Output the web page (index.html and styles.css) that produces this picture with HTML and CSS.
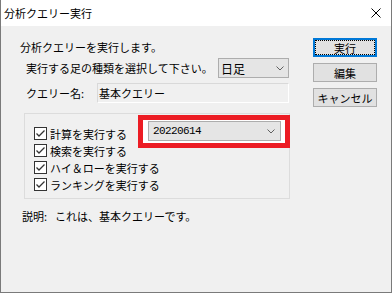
FILE: index.html
```html
<!DOCTYPE html>
<html lang="ja">
<head>
  <meta charset="UTF-8" />
  <title>分析クエリー実行</title>
  <link rel="stylesheet" href="styles.css">
</head>
<body>
  <div class="window">
    <div class="titlebar">
      <span class="title">分析クエリー実行</span>
      <svg class="close" width="10" height="10" viewBox="0 0 10 10">
        <path d="M0.5 0.5 L9.5 9.5 M9.5 0.5 L0.5 9.5" stroke="#000" stroke-width="1" fill="none" />
      </svg>
    </div>

    <div class="client">
      <div class="main">
        <p class="intro">分析クエリーを実行します。</p>

        <div class="field-row">
          <span class="label-long">実行する足の種類を選択して下さい。</span>
          <div class="combo combo-small">
            <span>日足</span>
            <svg class="chevron" width="8" height="5" viewBox="0 0 8 5"><polyline points="0.5,0.5 4,4 7.5,0.5" /></svg>
          </div>
        </div>

        <div class="field-row name-row">
          <span class="label-name">クエリー名:</span>
          <div class="edit">基本クエリー</div>
        </div>

        <div class="group">
          <ul class="checks">
            <li><svg class="checkbox" width="13" height="13" viewBox="0 0 13 13"><rect x="0.5" y="0.5" width="12" height="12" /><polyline points="2.5,6.5 5,9 10.5,3.5" /></svg>計算を実行する</li>
            <li><svg class="checkbox" width="13" height="13" viewBox="0 0 13 13"><rect x="0.5" y="0.5" width="12" height="12" /><polyline points="2.5,6.5 5,9 10.5,3.5" /></svg>検索を実行する</li>
            <li><svg class="checkbox" width="13" height="13" viewBox="0 0 13 13"><rect x="0.5" y="0.5" width="12" height="12" /><polyline points="2.5,6.5 5,9 10.5,3.5" /></svg>ハイ＆ローを実行する</li>
            <li><svg class="checkbox" width="13" height="13" viewBox="0 0 13 13"><rect x="0.5" y="0.5" width="12" height="12" /><polyline points="2.5,6.5 5,9 10.5,3.5" /></svg>ランキングを実行する</li>
          </ul>
          <div class="highlight">
            <div class="combo combo-date">
              <span class="date">20220614</span>
              <svg class="chevron" width="8" height="5" viewBox="0 0 8 5"><polyline points="0.5,0.5 4,4 7.5,0.5" /></svg>
            </div>
          </div>
        </div>

        <p class="note"><span class="note-label">説明:</span>これは、基本クエリーです。</p>
      </div>

      <div class="buttons">
        <div class="btn btn-default">実行</div>
        <div class="btn">編集</div>
        <div class="btn">キャンセル</div>
      </div>
    </div>
  </div>
</body>
</html>
```

FILE: styles.css
```css
* {
  box-sizing: border-box;
  margin: 0;
  padding: 0;
}

html, body {
  width: 100%;
  height: 100%;
  background: #f0f0f0;
  overflow: hidden;
}

body {
  font-family: "Noto Sans CJK JP", "Noto Sans", sans-serif;
  font-size: 11px;
  color: #000;
}

.window {
  width: 392px;
  height: 293px;
  display: flex;
  flex-direction: column;
  border: 1px solid #7a7a7a;
  border-top: none;
}

/* title bar */
.titlebar {
  height: 26px;
  flex-shrink: 0;
  background: #fff;
  display: flex;
  align-items: center;
  justify-content: space-between;
  padding: 0 10px 0 3px;
}

.title {
  font-size: 11px;
  line-height: 14px;
}

/* dialog body */
.client {
  flex: 1;
  display: flex;
}

.main {
  width: 312px;
  display: flex;
  flex-direction: column;
}

.intro {
  margin: 14px 0 0 19px;
  line-height: 14px;
}

.field-row {
  display: flex;
  align-items: center;
  height: 20px;
  margin: 4px 0 0 25px;
}

.name-row {
  margin-top: 5px;
}

.label-long {
  width: 192px;
}

.label-name {
  width: 71px;
}

.combo {
  height: 20px;
  display: flex;
  align-items: center;
  justify-content: space-between;
  background: #e5e5e5;
  border: 1px solid #adadad;
}

.combo-small {
  width: 71px;
  padding: 0 4px 0 2px;
  font-size: 12px;
}

.chevron {
  fill: none;
  stroke: #606060;
  stroke-width: 1;
}

.edit {
  width: 192px;
  height: 20px;
  display: flex;
  align-items: center;
  padding-left: 1px;
  border: 1px solid #d9d9d9;
  border-right-color: #fff;
  border-bottom-color: #fff;
}

/* group box */
.group {
  width: 266px;
  height: 86px;
  margin: 10px 0 0 23px;
  border: 1px solid #dcdcdc;
  display: flex;
  align-items: flex-start;
}

.checks {
  list-style: none;
  width: 113px;
  padding: 11px 0 0 9px;
}

.checks li {
  display: flex;
  align-items: center;
  height: 17px;
  white-space: nowrap;
}

.checkbox {
  margin-right: 3px;
  flex-shrink: 0;
}

.checkbox rect {
  fill: #fff;
  stroke: #333;
}

.checkbox polyline {
  fill: none;
  stroke: #333;
  stroke-width: 1.3;
}

.highlight {
  width: 152px;
  margin: 1px -1px 0 0;
  border: 5px solid #ec1c24;
  background: #fff;
  padding: 1px 4px 2px 5px;
}

.combo-date {
  width: 133px;
  padding: 0 5px 0 4px;
}

.date {
  font-family: "Liberation Mono", monospace;
  font-size: 11px;
  letter-spacing: -0.6px;
}

.note {
  margin: 10px 0 0 21px;
  line-height: 14px;
}

.note-label {
  margin-right: 8px;
}

/* buttons */
.buttons {
  width: 64px;
  padding-top: 12px;
  display: flex;
  flex-direction: column;
  gap: 6px;
}

.btn {
  height: 19px;
  display: flex;
  align-items: center;
  justify-content: center;
  background: #e1e1e1;
  border: 1px solid #adadad;
  font-size: 11px;
}

.btn-default {
  border: 2px solid #0078d7;
  outline: 1px dotted #000;
  outline-offset: -3px;
}
```
